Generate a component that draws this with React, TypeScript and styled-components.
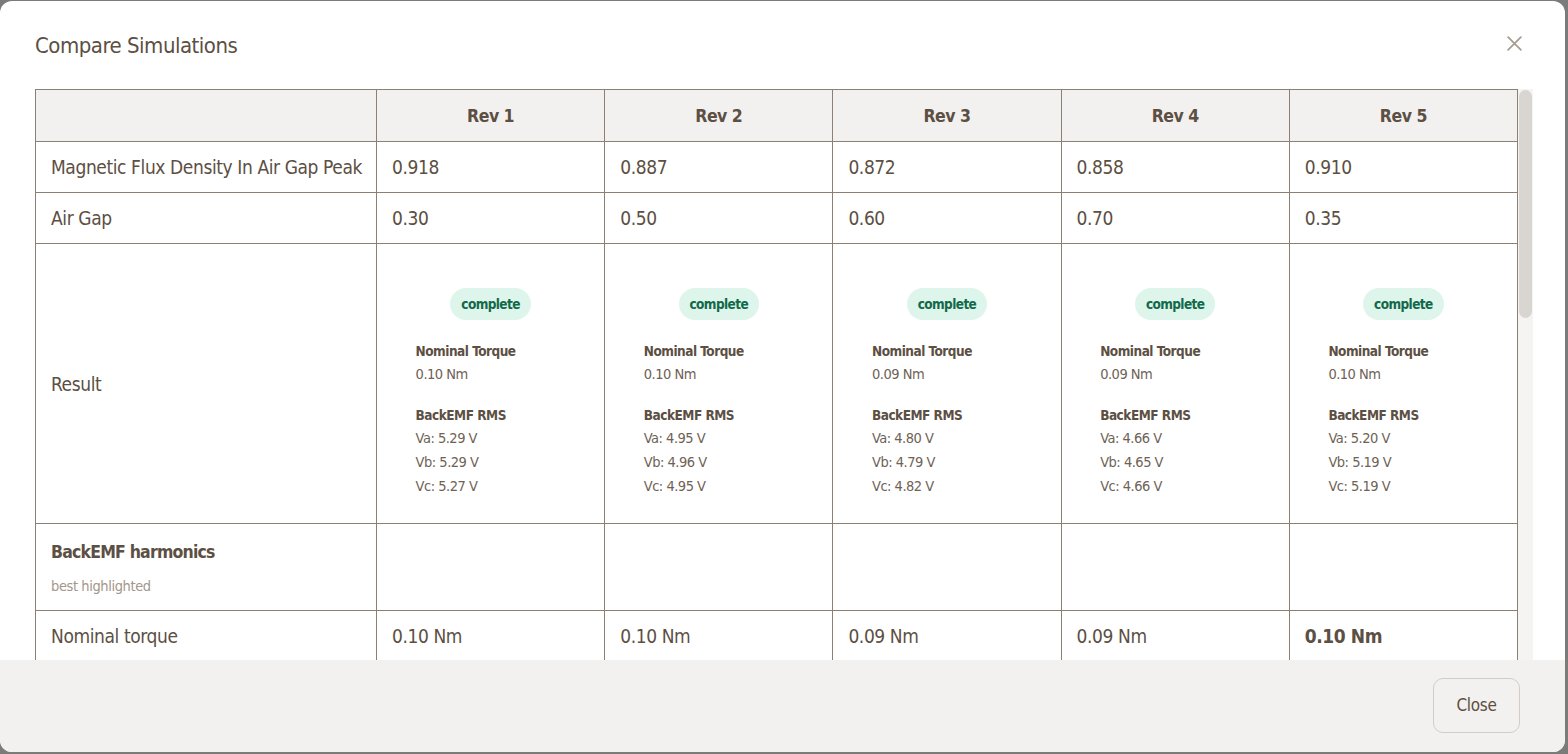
import React from 'react';
import styled, {createGlobalStyle} from 'styled-components';

const GlobalStyle = createGlobalStyle`
  html, body {
    margin: 0;
    padding: 0;
    background: #7b7b7b;
    font-family: "DejaVu Sans Condensed", "DejaVu Sans", sans-serif;
    color: #5c4f43;
  }
  * { box-sizing: border-box; }
`

type Rev = {
    name: string
    flux: string
    gap: string
    torque: string
    va: string
    vb: string
    vc: string
    best?: boolean
}

const revs: Rev[] = [
    {name: 'Rev 1', flux: '0.918', gap: '0.30', torque: '0.10 Nm', va: '5.29 V', vb: '5.29 V', vc: '5.27 V'},
    {name: 'Rev 2', flux: '0.887', gap: '0.50', torque: '0.10 Nm', va: '4.95 V', vb: '4.96 V', vc: '4.95 V'},
    {name: 'Rev 3', flux: '0.872', gap: '0.60', torque: '0.09 Nm', va: '4.80 V', vb: '4.79 V', vc: '4.82 V'},
    {name: 'Rev 4', flux: '0.858', gap: '0.70', torque: '0.09 Nm', va: '4.66 V', vb: '4.65 V', vc: '4.66 V'},
    {name: 'Rev 5', flux: '0.910', gap: '0.35', torque: '0.10 Nm', va: '5.20 V', vb: '5.19 V', vc: '5.19 V', best: true},
]

export default function App() {
    return (
        <>
            <GlobalStyle/>
            <Modal>
                <Header>
                    <Title>Compare Simulations</Title>
                    <CloseIcon aria-label="close">
                        <svg width="17" height="17" viewBox="0 0 16 16" fill="none" stroke="#a99d91" strokeWidth="1.7" strokeLinecap="round">
                            <path d="M2 2 L14 14 M14 2 L2 14"/>
                        </svg>
                    </CloseIcon>
                </Header>
                <Body>
                    <ScrollArea>
                        <Table>
                            <colgroup>
                                <col style={{width: 341}}/>
                                {revs.map(r => <col key={r.name}/>)}
                            </colgroup>
                            <thead>
                            <tr>
                                <HeadCell/>
                                {revs.map(r => <HeadCell key={r.name}>{r.name}</HeadCell>)}
                            </tr>
                            </thead>
                            <tbody>
                            <Row>
                                <Cell>Magnetic Flux Density In Air Gap Peak</Cell>
                                {revs.map(r => <Cell key={r.name}>{r.flux}</Cell>)}
                            </Row>
                            <Row>
                                <Cell>Air Gap</Cell>
                                {revs.map(r => <Cell key={r.name}>{r.gap}</Cell>)}
                            </Row>
                            <tr>
                                <Cell>Result</Cell>
                                {revs.map(r => (
                                    <ResultCell key={r.name}>
                                        <Badge>complete</Badge>
                                        <Summary>
                                            <MetricTitle>Nominal Torque</MetricTitle>
                                            <MetricValue>{r.torque}</MetricValue>
                                            <MetricTitle $spaced>BackEMF RMS</MetricTitle>
                                            <MetricValue>Va: {r.va}</MetricValue>
                                            <MetricValue>Vb: {r.vb}</MetricValue>
                                            <MetricValue>Vc: {r.vc}</MetricValue>
                                        </Summary>
                                    </ResultCell>
                                ))}
                            </tr>
                            <tr>
                                <SectionCell>
                                    <SectionTitle>BackEMF harmonics</SectionTitle>
                                    <SectionHint>best highlighted</SectionHint>
                                </SectionCell>
                                {revs.map(r => <SectionCell key={r.name}/>)}
                            </tr>
                            <Row>
                                <Cell>Nominal torque</Cell>
                                {revs.map(r => <Cell key={r.name} $best={r.best}>{r.torque}</Cell>)}
                            </Row>
                            </tbody>
                        </Table>
                    </ScrollArea>
                    <ScrollTrack>
                        <ScrollThumb/>
                    </ScrollTrack>
                </Body>
                <Footer>
                    <CloseButton>Close</CloseButton>
                </Footer>
            </Modal>
        </>
    )
}

const Modal = styled.div`
  margin: 1px 3px 0 0;
  height: 751px;
  background: #ffffff;
  border-radius: 12px;
  overflow: hidden;
  display: flex;
  flex-direction: column;
`

const Header = styled.div`
  height: 88px;
  flex-shrink: 0;
  display: flex;
  align-items: center;
  justify-content: space-between;
  padding: 0 42px 0 35px;
`

const Title = styled.h2`
  margin: 0;
  font-size: 22px;
  letter-spacing: -0.5px;
  font-weight: 400;
  color: #5c4f43;
`

const CloseIcon = styled.button`
  border: 0;
  background: none;
  padding: 0;
  display: flex;
  cursor: pointer;
  margin-top: -4px;
`

const Body = styled.div`
  flex: 1;
  min-height: 0;
  margin: 0 32px 0 35px;
  display: flex;
`

const ScrollArea = styled.div`
  flex: 1;
  min-width: 0;
  overflow: hidden;
`

const ScrollTrack = styled.div`
  position: relative;
  width: 15px;
  flex-shrink: 0;
  background: #f5f4f2;
`

const ScrollThumb = styled.div`
  position: absolute;
  top: 1px;
  left: 1px;
  right: 1px;
  height: 228px;
  border-radius: 7px;
  background: #d9d6d1;
`

const Table = styled.table`
  width: 100%;
  border-collapse: collapse;
  table-layout: fixed;
  font-size: 19px;
  letter-spacing: -0.4px;
`

const HeadCell = styled.th`
  height: 52px;
  background: #f3f1ef;
  border: 1px solid #8c8075;
  font-weight: 700;
  font-size: 17.5px;
  letter-spacing: -0.5px;
  color: #5c4f43;
  text-align: center;
`

const Row = styled.tr`
  height: 51px;
`

const Cell = styled.td<{ $best?: boolean }>`
  border: 1px solid #8c8075;
  padding: 0 15px;
  vertical-align: middle;
  font-weight: ${(p) => (p.$best ? 700 : 400)};
  white-space: nowrap;
`

const ResultCell = styled.td`
  border: 1px solid #8c8075;
  padding: 44px 0 25px;
  text-align: center;
  vertical-align: top;
`

const Badge = styled.span`
  display: inline-flex;
  align-items: center;
  justify-content: center;
  height: 32px;
  padding: 0 11px;
  border-radius: 16px;
  background: #ddf5ea;
  color: #12694a;
  font-size: 13.5px;
  letter-spacing: -0.6px;
  font-weight: 700;
`

const Summary = styled.div`
  width: 150px;
  margin: 20px auto 0;
  text-align: left;
`

const MetricTitle = styled.div<{ $spaced?: boolean }>`
  font-size: 13.5px;
  font-weight: 700;
  letter-spacing: -0.5px;
  line-height: 22px;
  margin-top: ${(p) => (p.$spaced ? '18px' : '0')};
`

const MetricValue = styled.div`
  font-size: 14.5px;
  letter-spacing: -0.5px;
  line-height: 24px;
  color: #6e6255;
`

const SectionCell = styled.td`
  border: 1px solid #8c8075;
  height: 87px;
  padding: 0 15px;
  vertical-align: middle;
`

const SectionTitle = styled.div`
  font-size: 17.5px;
  font-weight: 700;
  letter-spacing: -0.8px;
  line-height: 24px;
`

const SectionHint = styled.div`
  margin-top: 13px;
  font-size: 14.5px;
  letter-spacing: -0.4px;
  line-height: 18px;
  color: #a3968a;
`

const Footer = styled.div`
  height: 92px;
  flex-shrink: 0;
  background: #f3f1ef;
  display: flex;
  align-items: center;
  justify-content: flex-end;
  padding: 0 45px 2px 0;
`

const CloseButton = styled.button`
  width: 87px;
  height: 55px;
  border: 1px solid #d4ccc4;
  border-radius: 10px;
  background: #f3f1ef;
  font-family: inherit;
  font-size: 17px;
  letter-spacing: -0.3px;
  color: #5c4f43;
  cursor: pointer;
`
